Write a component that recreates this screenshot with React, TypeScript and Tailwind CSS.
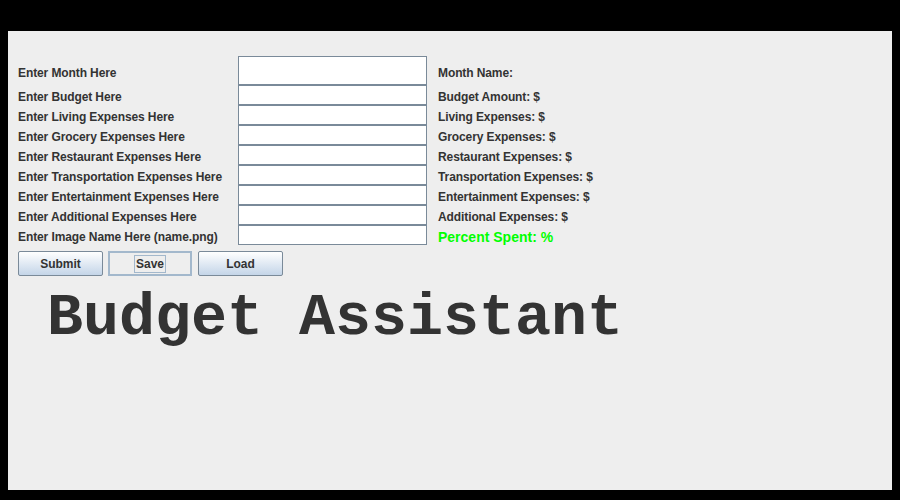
const rows: { label: string; right: string; green?: boolean }[] = [
  { label: "Enter Month Here", right: "Month Name:" },
  { label: "Enter Budget Here", right: "Budget Amount: $" },
  { label: "Enter Living Expenses Here", right: "Living Expenses: $" },
  { label: "Enter Grocery Expenses Here", right: "Grocery Expenses: $" },
  { label: "Enter Restaurant Expenses Here", right: "Restaurant Expenses: $" },
  { label: "Enter Transportation Expenses Here", right: "Transportation Expenses: $" },
  { label: "Enter Entertainment Expenses Here", right: "Entertainment Expenses: $" },
  { label: "Enter Additional Expenses Here", right: "Additional Expenses: $" },
  { label: "Enter Image Name Here (name.png)", right: "Percent Spent: %", green: true },
];

function JButton({ text }: { text: string }) {
  return (
    <button className="w-[85px] h-[25px] border border-[#7a8a99] bg-gradient-to-b from-white to-[#c4d5e8] text-[12px] font-bold text-[#333333] rounded-[2px]">
      {text}
    </button>
  );
}

export default function App() {
  return (
    <div className="w-[900px] h-[500px] bg-black pt-[31px] pl-[8px]" style={{ fontFamily: '"Liberation Sans", Arial, sans-serif' }}>
      <div className="w-[884px] h-[459px] bg-[#eeeeee] pt-[25px] pl-[10px]">
        <div className="flex flex-col">
          {rows.map((r, i) => (
            <div key={i} className={`flex items-center ${i === 0 ? "h-[29px]" : "h-[20px]"}`}>
              <span className="w-[220px] pt-[4px] text-[12px] font-bold text-[#333333] tracking-[-0.1px]">{r.label}</span>
              <div className="w-[189px] h-full bg-white border border-[#7a8a99]" />
              <span
                className={
                  r.green
                    ? "ml-[11px] pt-[4px] text-[14px] font-bold text-[#00ff00]"
                    : "ml-[11px] pt-[4px] text-[12px] font-bold text-[#333333] tracking-[-0.1px]"
                }
              >
                {r.right}
              </span>
            </div>
          ))}
        </div>
        <div className="flex mt-[6px] gap-[5px]">
          <JButton text="Submit" />
          <button className="w-[84px] h-[25px] border-2 border-[#a3b8cc] bg-[#eeeeee] text-[12px] font-bold text-[#333333] flex items-center justify-center">
            <span className="border border-[#a3b8cc] px-[1px] leading-[16px]">Save</span>
          </button>
          <button className="ml-[1px] w-[85px] h-[25px] border border-[#7a8a99] bg-gradient-to-b from-white to-[#c4d5e8] text-[12px] font-bold text-[#333333] rounded-[2px]">
            Load
          </button>
        </div>
        <div
          className="mt-[6px] ml-[29px] text-[60px] font-bold text-[#333333] leading-[72px]"
          style={{ fontFamily: '"Liberation Mono", "Courier New", monospace' }}
        >
          Budget Assistant
        </div>
      </div>
    </div>
  );
}
